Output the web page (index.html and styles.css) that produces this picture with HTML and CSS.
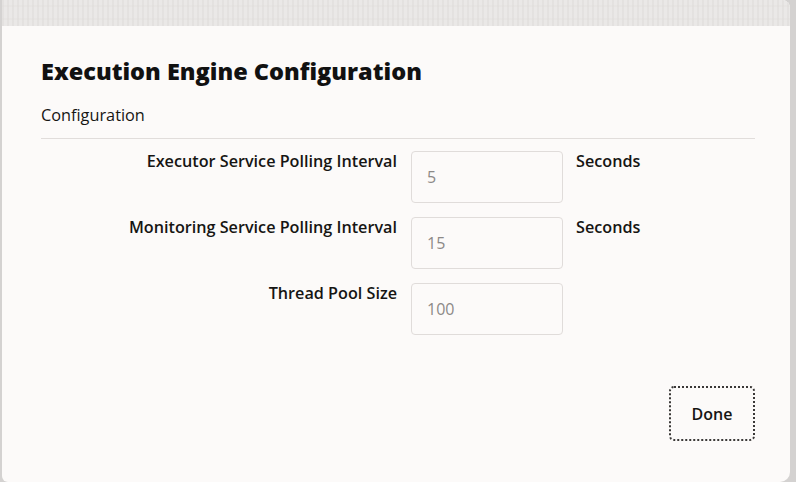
FILE: index.html
```html
<!DOCTYPE html>
<html>
<head>
<meta charset="utf-8">
<link rel="stylesheet" href="styles.css">
</head>
<body>
<div class="frame">
  <div class="dialog">
    <div class="band"></div>
    <div class="body">
      <h1 class="title">Execution Engine Configuration</h1>
      <div class="section">Configuration</div>
      <div class="form">
        <div class="label">Executor Service Polling Interval</div>
        <div class="input">5</div>
        <div class="unit">Seconds</div>
        <div class="label">Monitoring Service Polling Interval</div>
        <div class="input">15</div>
        <div class="unit">Seconds</div>
        <div class="label">Thread Pool Size</div>
        <div class="input">100</div>
        <div class="unit"></div>
      </div>
      <div class="actions">
        <button class="done">Done</button>
      </div>
    </div>
  </div>
</div>
</body>
</html>
```

FILE: styles.css
```css
html, body {
  margin: 0;
  padding: 0;
}
body {
  width: 796px;
  height: 482px;
  overflow: hidden;
  background: #d4d2d1;
  font-family: "Open Sans", Lato, sans-serif;
  color: #161513;
}
.frame {
  display: flex;
  height: 482px;
}
.dialog {
  width: 788px;
  height: 482px;
  margin-left: 2px;
  background: #fcfaf9;
  border-radius: 0 8px 10px 6px;
  display: flex;
  flex-direction: column;
  overflow: hidden;
}
.band {
  height: 26px;
  flex: none;
  background-color: #eae8e7;
  background-image:
    repeating-linear-gradient(90deg, rgba(220,217,215,0.45) 0 2px, rgba(235,233,232,0) 2px 5px),
    repeating-linear-gradient(0deg, rgba(235,233,232,0) 0 6px, rgba(228,225,223,0.5) 6px 8px, rgba(235,233,232,0) 8px 13px);
}
.body {
  flex: 1;
  padding: 29px 35px 0 39px;
  display: flex;
  flex-direction: column;
}
.title {
  margin: 0;
  font-size: 23.5px;
  line-height: 32px;
  font-weight: 800;
  color: #111;
}
.section {
  margin-top: 17px;
  font-size: 16.3px;
  line-height: 22px;
  padding-bottom: 12px;
  border-bottom: 1px solid #e1dddb;
  color: #161513;
}
.form {
  margin-top: 10px;
  display: grid;
  grid-template-columns: 356px 152px auto;
  column-gap: 14px;
  row-gap: 12px;
  align-items: start;
}
.label {
  text-align: right;
  font-weight: 600;
  font-size: 16.2px;
  line-height: 22px;
  margin-top: 1px;
}
.unit {
  font-weight: 600;
  font-size: 16.2px;
  line-height: 22px;
  margin-top: 1px;
  margin-left: -1px;
}
.input {
  box-sizing: border-box;
  height: 52px;
  margin-top: 2px;
  border: 1px solid #e0dcda;
  border-radius: 4px;
  background: #fcfaf9;
  color: #8c8987;
  font-size: 16px;
  line-height: 50px;
  padding-left: 15px;
}
.actions {
  display: flex;
  justify-content: flex-end;
  margin-top: 51px;
}
.done {
  width: 86px;
  height: 55px;
  box-sizing: border-box;
  border: 2px dotted #3a3837;
  border-radius: 5px;
  background: #fcfaf9;
  font-family: "Open Sans", Lato, sans-serif;
  font-weight: 600;
  font-size: 16px;
  color: #161513;
  padding: 0;
}
```
